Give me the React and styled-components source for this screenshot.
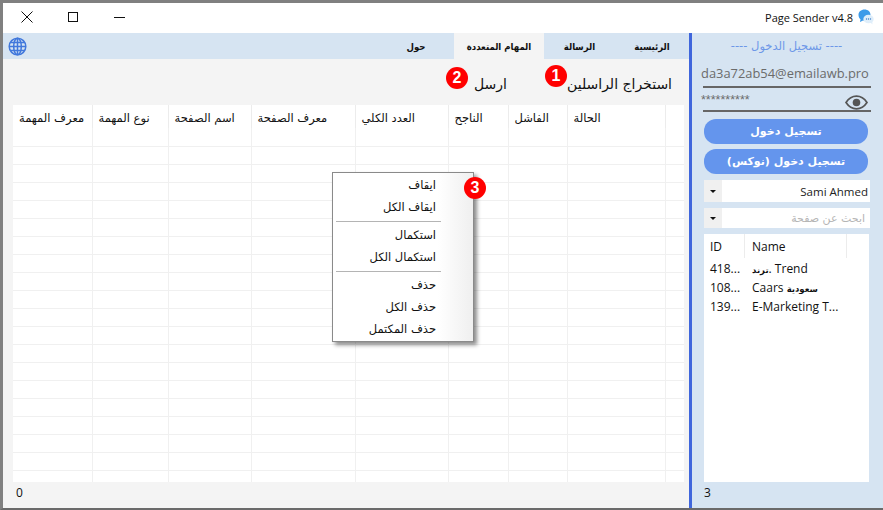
import React from 'react'
import styled, { createGlobalStyle } from 'styled-components'

const GlobalStyle = createGlobalStyle`
  html, body {
    margin: 0;
    padding: 0;
    background: #fff;
  }
  * {
    box-sizing: border-box;
  }
`

const AR = `Tahoma, "DejaVu Sans", "Noto Sans", sans-serif`
const LAT = `"Open Sans", "DejaVu Sans", sans-serif`

const Window = styled.div`
  position: relative;
  width: 883px;
  height: 510px;
  display: flex;
  flex-direction: column;
  border-top: 3px solid #808080;
  border-left: 3px solid #808080;
  border-bottom: 2px solid #6a6a6a;
  background: #f4f4f4;
  overflow: hidden;
  font-family: ${AR};
  color: #111;
`

const TitleBar = styled.div`
  height: 30px;
  flex: none;
  background: #fff;
  display: flex;
  align-items: center;
  padding: 0 9px 2px 0;
`

const WinButton = styled.div`
  width: 46px;
  height: 28px;
  display: flex;
  align-items: center;
  justify-content: center;
  margin-left: ${p => p.$first ? '1px' : '0'};
`

const AppTitle = styled.div`
  margin-left: auto;
  font-family: ${LAT};
  font-size: 11px;
  display: flex;
  align-items: center;
  gap: 5px;
`

const Body = styled.div`
  flex: 1;
  display: flex;
  min-height: 0;
`

const Main = styled.div`
  width: 686px;
  flex: none;
  display: flex;
  flex-direction: column;
`

const TabBar = styled.div`
  height: 26px;
  flex: none;
  background: #d6e4f2;
  display: flex;
  align-items: stretch;
  padding-left: 5px;
`

const GlobeWrap = styled.div`
  margin-right: auto;
  display: flex;
  align-items: center;
`

const Tab = styled.div`
  width: ${p => p.$w}px;
  display: flex;
  align-items: center;
  justify-content: center;
  font-family: "DejaVu Sans Condensed", ${AR};
  font-size: 9.5px;
  font-weight: bold;
  white-space: nowrap;
  background: ${p => p.$active ? '#f4f4f4' : 'transparent'};
`

const ActionBar = styled.div`
  height: 46px;
  flex: none;
  display: flex;
  justify-content: flex-end;
  align-items: flex-end;
  padding: 0 17px 12px 0;
  gap: 60px;
  font-size: 14px;
`

const Action = styled.div`
  position: relative;
  line-height: 18px;
`

const Badge = styled.div`
  position: absolute;
  width: 22px;
  height: 22px;
  border-radius: 50%;
  background: #f00;
  color: #fff;
  font-family: "Liberation Sans", sans-serif;
  font-weight: bold;
  font-size: 16px;
  display: flex;
  align-items: center;
  justify-content: center;
  left: ${p => p.$x}px;
  top: ${p => p.$y}px;
`

const TableWrap = styled.div`
  height: 377px;
  flex: none;
  margin-left: 10px;
  width: 671px;
  background: #fff;
  overflow: hidden;
`

const Grid = styled.table`
  border-collapse: collapse;
  table-layout: fixed;
  width: 671px;
`

const Head = styled.th`
  height: 23px;
  padding: 2px 0 0 6px;
  font-size: 11.5px;
  font-weight: normal;
  text-align: left;
  border-right: 1px solid #ececec;
  vertical-align: middle;
  white-space: nowrap;
  overflow: hidden;
`

const Cell = styled.td`
  height: 18px;
  padding: 0;
  border-right: 1px solid #f0f0f0;
  border-bottom: 1px solid #f0f0f0;
`

const StatusBar = styled.div`
  flex: 1;
  display: flex;
  align-items: center;
  padding: 0 0 6px ${p => p.$pad}px;
  font-family: ${LAT};
  font-size: 12px;
`

const Menu = styled.div`
  position: absolute;
  left: 329px;
  top: 169px;
  width: 142px;
  height: 170px;
  background: linear-gradient(to right, #fff 75%, #efefef);
  border: 1px solid #8a8a8a;
  box-shadow: 3px 3px 4px rgba(0, 0, 0, 0.45);
  padding: 1px 37px 0 3px;
  font-size: 11.5px;
`

const MenuItem = styled.div`
  height: 22px;
  display: flex;
  align-items: center;
  justify-content: flex-end;
`

const MenuSep = styled.div`
  height: 1px;
  background: #b4b4b4;
  margin: 3px -5px 2px 0;
`

const Side = styled.div`
  flex: 1;
  background: #d6e4f2;
  border-left: 3px solid #3f66dc;
  display: flex;
  flex-direction: column;
`

const SideTitle = styled.div`
  height: 26px;
  display: flex;
  align-items: center;
  justify-content: center;
  color: #6d97e8;
  font-size: 11.5px;
  padding-right: 2px;
  direction: rtl;
`

const Field = styled.div`
  margin: 0 12px 0 11px;
  height: ${p => p.$h}px;
  flex: none;
  border-bottom: 2px solid #666;
  display: flex;
  align-items: center;
  justify-content: space-between;
  padding-top: 1px;
  color: #6b6b6b;
  font-family: ${LAT};
  font-size: 12.9px;
  white-space: nowrap;
`

const FieldText = styled.span`
  margin-left: -2px;
`

const Stars = styled.span`
  margin-left: -2px;
  align-self: flex-start;
  font-family: "Liberation Sans", sans-serif;
  font-size: 12.5px;
  line-height: 14px;
  margin-top: 4px;
`

const EyeWrap = styled.span`
  display: flex;
  margin: 6px 3px 0 0;
`

const Pill = styled.div`
  margin: ${p => p.$top}px 15px 0 12px;
  height: 25px;
  flex: none;
  border-radius: 12px;
  background: #6495ed;
  color: #fff;
  font-weight: bold;
  font-size: 11px;
  display: flex;
  align-items: center;
  justify-content: center;
`

const Select = styled.div`
  margin: ${p => p.$top}px 13px 0 12px;
  height: ${p => p.$h}px;
  flex: none;
  background: #fff;
  display: flex;
  align-items: center;
  font-family: ${LAT};
  font-size: 12px;
`

const Caret = styled.div`
  width: 18px;
  height: 100%;
  background: #f0f0f0;
  display: flex;
  align-items: center;
  justify-content: center;
  &::after {
    content: '';
    border-left: 3px solid transparent;
    border-right: 3px solid transparent;
    border-top: 3px solid #111;
  }
`

const SelectText = styled.div`
  flex: 1;
  text-align: right;
  padding-right: ${p => p.$hint ? '5px' : '2px'};
  font-family: ${p => p.$hint ? AR : LAT};
  font-size: ${p => p.$hint ? '11px' : '11.5px'};
  color: ${p => p.$hint ? '#b5b5b5' : '#222'};
`

const PageList = styled.div`
  margin: 6px 14px 0 12px;
  height: 248px;
  flex: none;
  background: #fff;
  font-family: ${LAT};
  font-size: 12px;
`

const ListHead = styled.div`
  height: 24px;
  display: grid;
  grid-template-columns: 41px 102px 1fr;
  margin-bottom: 1px;
`

const ListHeadCell = styled.div`
  display: flex;
  align-items: center;
  padding: 1px 0 0 ${p => p.$pad}px;
  border-right: 1px solid #ececec;
`

const ListRow = styled.div`
  height: 19px;
  display: grid;
  grid-template-columns: 41px 1fr;
  align-items: center;
`

const ListId = styled.div`
  padding-left: 6px;
`

const ListName = styled.div`
  padding-left: 7px;
  white-space: nowrap;
`

const TinyArabic = styled.span`
  font-family: ${AR};
  font-size: 8.5px;
  font-weight: bold;
`

const SideStatus = styled(StatusBar)`
  flex: 1;
`

const columns = [
  { w: 79, t: 'معرف المهمة' },
  { w: 76, t: 'نوع المهمة' },
  { w: 83, t: 'اسم الصفحة' },
  { w: 104, t: 'معرف الصفحة' },
  { w: 93, t: 'العدد الكلي' },
  { w: 60, t: 'الناجح' },
  { w: 59, t: 'الفاشل' },
  { w: 98, t: 'الحالة' },
  { w: 19, t: '' },
]

const rows = Array.from({ length: 20 }, (_, i) => i)

const Globe = () => (
  <svg width="19" height="19" viewBox="0 0 19 19" fill="none" stroke="#4178dc" strokeWidth="1.5">
    <circle cx="9.5" cy="9.5" r="8.3" />
    <ellipse cx="9.5" cy="9.5" rx="3.8" ry="8.3" />
    <path d="M9.5 1.2v16.6M1.2 9.5h16.6M2.5 5.4h14M2.5 13.6h14" />
  </svg>
)

const Eye = () => (
  <svg width="23" height="15" viewBox="0 0 23 15" fill="none">
    <path d="M1 7.5C4 3 7.5 1.2 11.5 1.2S19 3 22 7.5c-3 4.5-6.5 6.3-10.5 6.3S4 12 1 7.5z" stroke="#555" strokeWidth="1.7" />
    <circle cx="11.5" cy="7.5" r="3.8" fill="#555" />
  </svg>
)

const ChatLogo = () => (
  <svg width="16" height="16" viewBox="0 0 16 16">
    <path d="M6.5.5C3 .5.5 2.800.5 6c0 1.800.8 3.300 2 4.300L2 13l3-1.500c.6.1 1 .2 1.500.2 3.500 0 6-2.400 6-5.700S10 .5 6.500.5z" fill="#3d9be9" />
    <ellipse cx="10.5" cy="10" rx="5.2" ry="4.3" fill="#dfeefa" />
    <path d="M12 13l2.500 2.500-.3-3.500z" fill="#dfeefa" />
    <circle cx="8.5" cy="10" r=".7" fill="#3d7fc9" />
    <circle cx="10.5" cy="10" r=".7" fill="#3d7fc9" />
    <circle cx="12.5" cy="10" r=".7" fill="#3d7fc9" />
  </svg>
)

const App = () => (
  <>
    <GlobalStyle />
    <Window>
      <TitleBar>
        <WinButton $first>
          <svg width="12" height="12" viewBox="0 0 12 12" stroke="#111" fill="none"><path d="M.5.5l11 11M11.5.5l-11 11" /></svg>
        </WinButton>
        <WinButton>
          <svg width="10" height="10" viewBox="0 0 10 10" stroke="#111" fill="none"><rect x=".5" y=".5" width="9" height="9" /></svg>
        </WinButton>
        <WinButton>
          <svg width="11" height="3" viewBox="0 0 11 3" stroke="#111" fill="none"><path d="M0 1.5h11" /></svg>
        </WinButton>
        <AppTitle>Page Sender v4.8 <ChatLogo /></AppTitle>
      </TitleBar>
      <Body>
        <Main>
          <TabBar>
            <GlobeWrap><Globe /></GlobeWrap>
            <Tab $w={76}>حول</Tab>
            <Tab $w={90} $active>المهام المتعددة</Tab>
            <Tab $w={71}>الرسالة</Tab>
            <Tab $w={74}>الرئيسية</Tab>
          </TabBar>
          <ActionBar>
            <Action>
              ارسل
              <Badge $x={-28} $y={-8}>2</Badge>
            </Action>
            <Action>
              استخراج الراسلين
              <Badge $x={-22} $y={-10}>1</Badge>
            </Action>
          </ActionBar>
          <TableWrap>
            <Grid>
              <colgroup>
                {columns.map((c, i) => <col key={i} style={{ width: c.w }} />)}
              </colgroup>
              <thead>
                <tr>{columns.map((c, i) => <Head key={i}>{c.t}</Head>)}</tr>
              </thead>
              <tbody>
                {rows.map(r => (
                  <tr key={r}>{columns.map((c, i) => <Cell key={i} />)}</tr>
                ))}
              </tbody>
            </Grid>
          </TableWrap>
          <StatusBar $pad={13}>0</StatusBar>
        </Main>
        <Side>
          <SideTitle>---- تسجيل الدخول ----</SideTitle>
          <Field $h={29}><FieldText>da3a72ab54@emailawb.pro</FieldText></Field>
          <Field $h={24}>
            <Stars>**********</Stars>
            <EyeWrap><Eye /></EyeWrap>
          </Field>
          <Pill $top={7}>تسجيل دخول</Pill>
          <Pill $top={5}>تسجيل دخول (نوكس)</Pill>
          <Select $top={6} $h={22}>
            <Caret />
            <SelectText>Sami Ahmed</SelectText>
          </Select>
          <Select $top={6} $h={20}>
            <Caret />
            <SelectText $hint>ابحث عن صفحة</SelectText>
          </Select>
          <PageList>
            <ListHead>
              <ListHeadCell $pad={6}>ID</ListHeadCell>
              <ListHeadCell $pad={7}>Name</ListHeadCell>
            </ListHead>
            <ListRow><ListId>418...</ListId><ListName><TinyArabic>ترند</TinyArabic>. Trend</ListName></ListRow>
            <ListRow><ListId>108...</ListId><ListName>Caars <TinyArabic>سعودية</TinyArabic></ListName></ListRow>
            <ListRow><ListId>139...</ListId><ListName>E-Marketing T...</ListName></ListRow>
          </PageList>
          <SideStatus $pad={12}>3</SideStatus>
        </Side>
      </Body>
      <Menu>
        <MenuItem>ايقاف</MenuItem>
        <MenuItem>ايقاف الكل</MenuItem>
        <MenuSep />
        <MenuItem>استكمال</MenuItem>
        <MenuItem>استكمال الكل</MenuItem>
        <MenuSep />
        <MenuItem>حذف</MenuItem>
        <MenuItem>حذف الكل</MenuItem>
        <MenuItem>حذف المكتمل</MenuItem>
        <Badge $x={131} $y={4}>3</Badge>
      </Menu>
    </Window>
  </>
)

export default App
